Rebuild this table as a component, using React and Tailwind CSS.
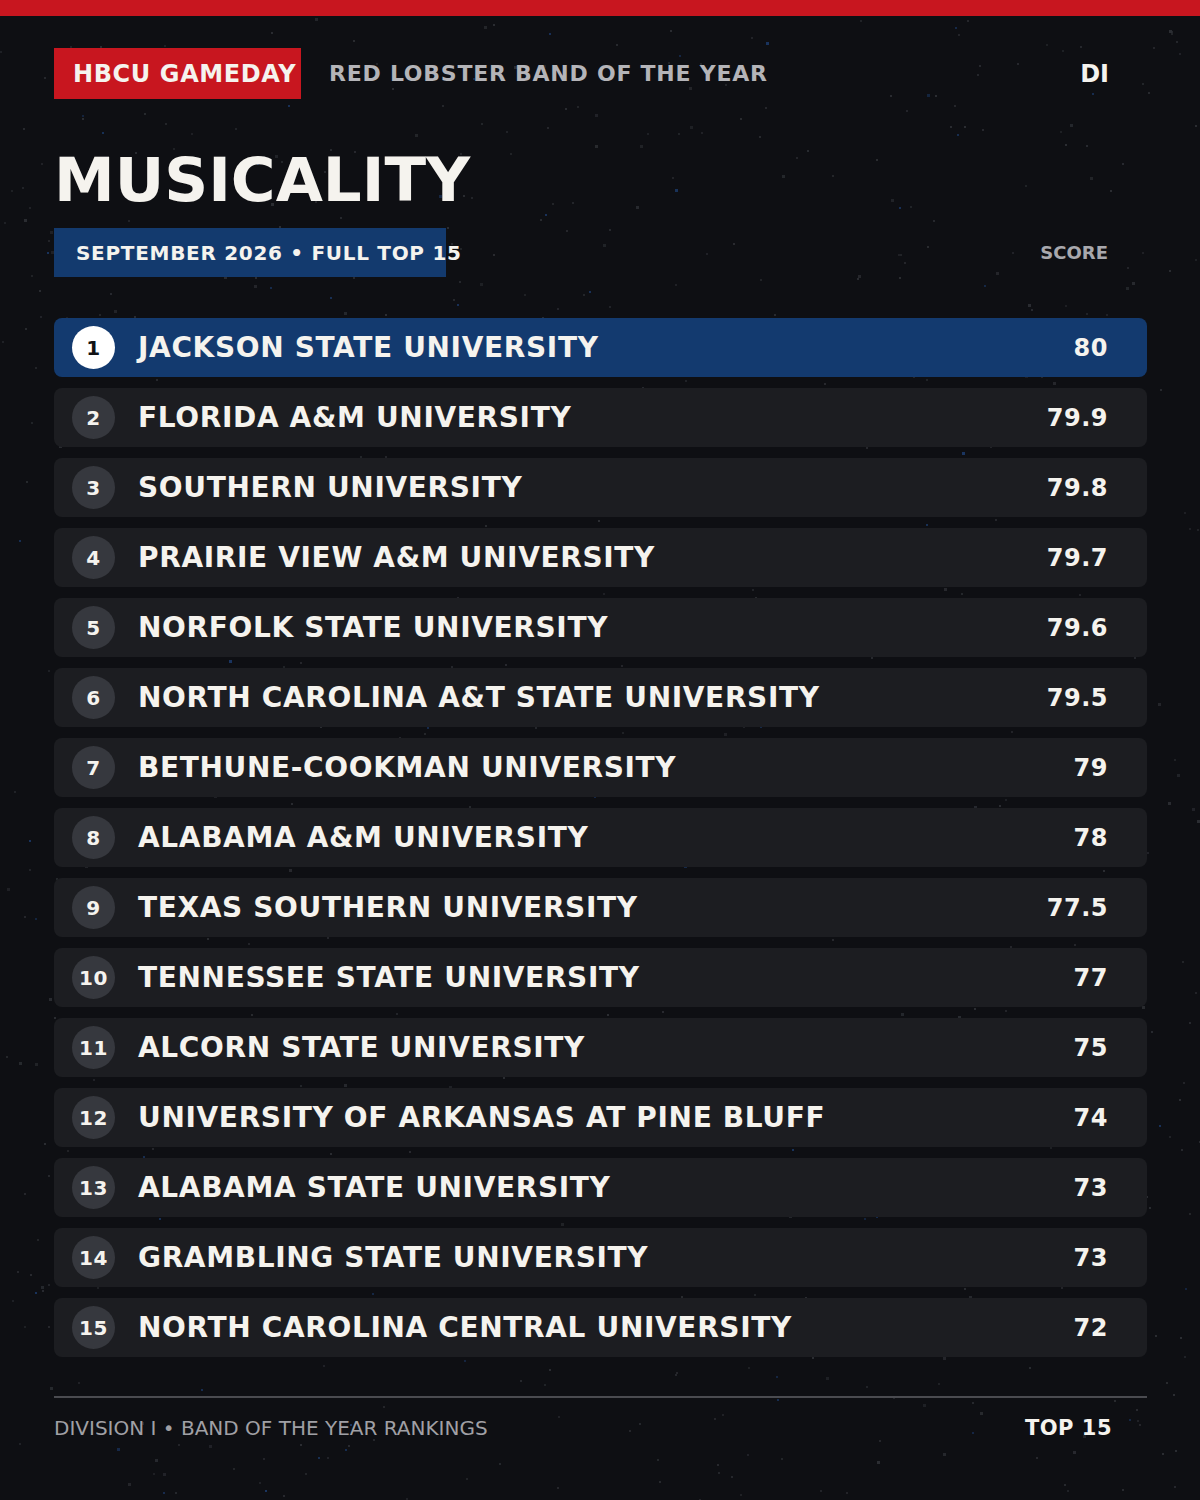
import { useMemo } from "react"

const rankings = [
  { rank: 1, name: "JACKSON STATE UNIVERSITY", score: "80" },
  { rank: 2, name: "FLORIDA A&M UNIVERSITY", score: "79.9" },
  { rank: 3, name: "SOUTHERN UNIVERSITY", score: "79.8" },
  { rank: 4, name: "PRAIRIE VIEW A&M UNIVERSITY", score: "79.7" },
  { rank: 5, name: "NORFOLK STATE UNIVERSITY", score: "79.6" },
  { rank: 6, name: "NORTH CAROLINA A&T STATE UNIVERSITY", score: "79.5" },
  { rank: 7, name: "BETHUNE-COOKMAN UNIVERSITY", score: "79" },
  { rank: 8, name: "ALABAMA A&M UNIVERSITY", score: "78" },
  { rank: 9, name: "TEXAS SOUTHERN UNIVERSITY", score: "77.5" },
  { rank: 10, name: "TENNESSEE STATE UNIVERSITY", score: "77" },
  { rank: 11, name: "ALCORN STATE UNIVERSITY", score: "75" },
  { rank: 12, name: "UNIVERSITY OF ARKANSAS AT PINE BLUFF", score: "74" },
  { rank: 13, name: "ALABAMA STATE UNIVERSITY", score: "73" },
  { rank: 14, name: "GRAMBLING STATE UNIVERSITY", score: "73" },
  { rank: 15, name: "NORTH CAROLINA CENTRAL UNIVERSITY", score: "72" },
]

// small seeded random so the star dots stay put between renders
const makeRandom = (seed) => {
  let a = seed
  return () => {
    a |= 0
    a = (a + 0x6d2b79f5) | 0
    let t = Math.imul(a ^ (a >>> 15), 1 | a)
    t = (t + Math.imul(t ^ (t >>> 7), 61 | t)) ^ t
    return ((t ^ (t >>> 14)) >>> 0) / 4294967296
  }
}

const Stars = () => {
  const dots = useMemo(() => {
    const rand = makeRandom(42)
    const list = []
    for (let i = 0; i < 1000; i++) {
      const blue = rand() < 0.12
      list.push({
        x: Math.floor(rand() * 1200),
        y: Math.floor(rand() * 1500),
        s: rand() < 0.2 ? 3 : 2,
        c: blue ? "#1a3560" : "#2b2d32",
        o: 0.55 + rand() * 0.45,
      })
    }
    return list
  }, [])

  return (
    <svg className="absolute inset-0" width="1200" height="1500">
      {dots.map((d, i) => (
        <rect key={i} x={d.x} y={d.y} width={d.s} height={d.s} fill={d.c} opacity={d.o} />
      ))}
    </svg>
  )
}

const Row = ({ item }) => {
  const first = item.rank === 1
  return (
    <div
      className={`h-[59px] rounded-lg flex items-center pl-[18px] pr-[39px] ${
        first ? "bg-[#133a6f]" : "bg-[#1c1d21]"
      }`}
    >
      <div
        className={`w-[43px] h-[43px] rounded-full flex items-center justify-center text-[20px] font-bold tracking-[0.5px] ${
          first ? "bg-white text-[#111215]" : "bg-[#36383e] text-[#f5f3ee]"
        }`}
      >
        {item.rank}
      </div>
      <div className="ml-[23px] text-[28px] font-bold tracking-[0.65px] text-[#f5f3ee] whitespace-nowrap">
        {item.name}
      </div>
      <div className="ml-auto text-[24px] font-bold tracking-[0.5px] text-[#f5f3ee]">{item.score}</div>
    </div>
  )
}

export default function App() {
  return (
    <div className="relative w-[1200px] h-[1500px] overflow-hidden bg-[#0e0f13] font-['DejaVu_Sans',sans-serif] text-[#f5f3ee]">
      <Stars />
      <div className="relative">
        <div className="h-4 bg-[#c8161f]" />

        <div className="pl-[54px] pr-[53px]">
          {/* top line */}
          <div className="mt-8 h-[51px] flex items-center">
            <div className="w-[247px] h-[51px] bg-[#c8161f] flex items-center pl-[19px] text-[24px] font-bold tracking-[0.6px] whitespace-nowrap">
              HBCU GAMEDAY
            </div>
            <div className="ml-[28px] text-[22px] font-bold tracking-[0.75px] text-[#b4b4b8] whitespace-nowrap">
              RED LOBSTER BAND OF THE YEAR
            </div>
            <div className="ml-auto mr-[38px] text-[24px] font-bold">DI</div>
          </div>

          <h1 className="mt-[50px] text-[61px] leading-[62px] font-bold">MUSICALITY</h1>

          <div className="mt-[17px] h-[49px] flex items-center justify-between">
            <div className="w-[392px] h-[49px] bg-[#133a6e] flex items-center pl-[22px] text-[20px] font-bold tracking-[0.7px] whitespace-nowrap">
              SEPTEMBER 2026 • FULL TOP 15
            </div>
            <div className="mr-[39px] text-[18px] font-bold text-[#a8a8ad]">SCORE</div>
          </div>

          {/* list */}
          <div className="mt-[41px] flex flex-col gap-[11px]">
            {rankings.map((item) => (
              <Row key={item.rank} item={item} />
            ))}
          </div>

          {/* footer */}
          <div className="mt-[39px] h-[2px] bg-[#4a4b50]" />
          <div className="mt-4 flex items-center justify-between">
            <div className="text-[20px] leading-[28px] text-[#a0a0a5]">DIVISION I • BAND OF THE YEAR RANKINGS</div>
            <div className="mr-[35px] text-[21px] leading-[28px] font-bold tracking-[0.5px]">TOP 15</div>
          </div>
        </div>
      </div>
    </div>
  )
}
